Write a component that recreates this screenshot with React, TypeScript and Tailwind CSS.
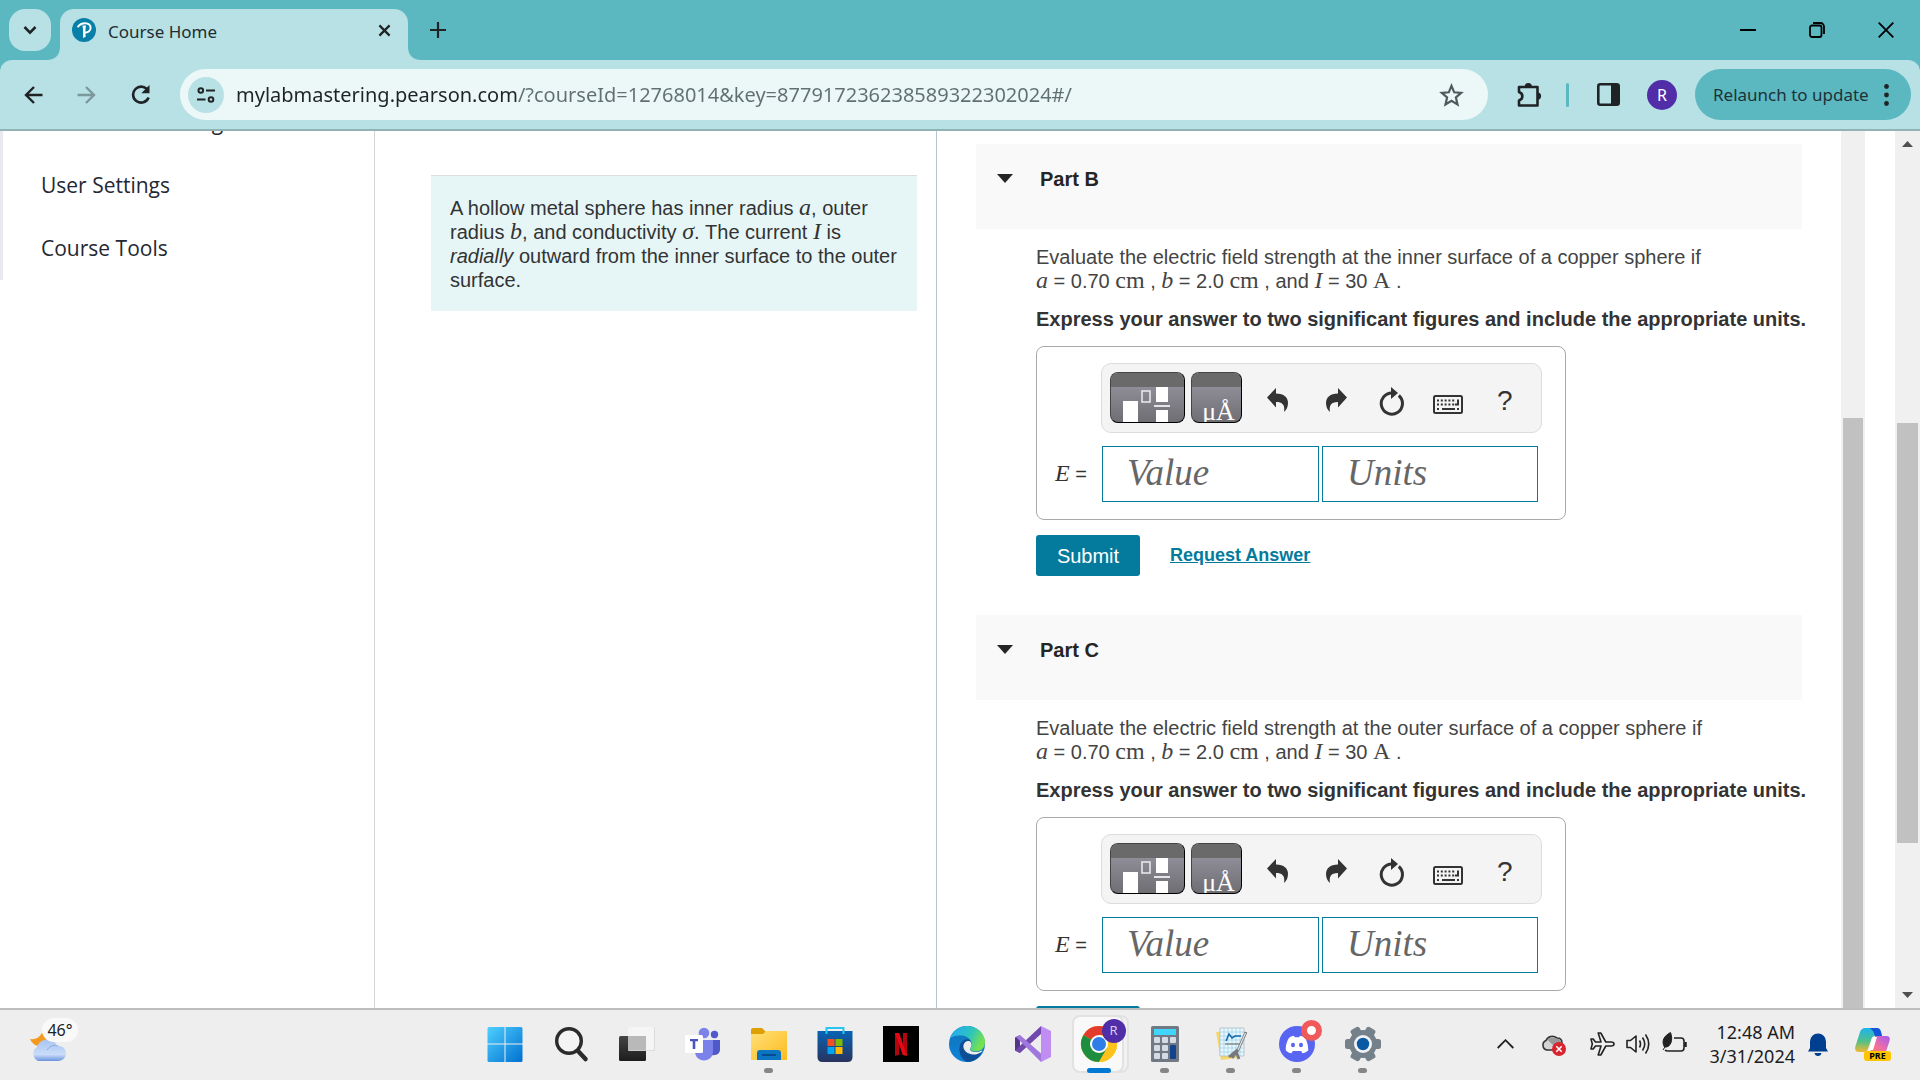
import React from "react";

const UI = "font-['Noto_Sans',sans-serif]";

function TabStrip() {
  return (
    <div className="flex h-[60px] shrink-0 items-stretch bg-[#5bb8c1]">
      <button aria-label="Search tabs" className="mt-[9px] ml-[9px] flex h-[42px] w-[42px] items-center justify-center rounded-2xl bg-[#b8e1e5]">
        <svg width="14" height="10" viewBox="0 0 14 10" fill="none" stroke="#1f2326" strokeWidth="2.6"><path d="M1.5 2 7 7.6 12.5 2" /></svg>
      </button>
      <div className="relative mt-[9px] ml-[9px] flex w-[348px] items-center rounded-t-[14px] bg-[#b8e1e5] pr-[17px] pb-[9px] pl-3">
        <svg className="absolute bottom-0 -left-[13px]" width="13" height="13" viewBox="0 0 13 13"><path d="M13 0v13H0C8 13 13 8 13 0z" fill="#b8e1e5" /></svg>
        <svg className="absolute -right-[13px] bottom-0" width="13" height="13" viewBox="0 0 13 13"><path d="M0 0v13h13C5 13 0 8 0 0z" fill="#b8e1e5" /></svg>
        <svg width="24" height="24" viewBox="0 0 24 24">
          <circle cx="12" cy="12" r="12" fill="#077fa8" />
          <path d="M5.600 9.200C7.500 6.400 10 5.200 13 5.200c3.600 0 5.800 1.900 5.600 4.800-.3 3.200-3.100 4.900-7.300 4.700" fill="none" stroke="#fff" strokeWidth="2" />
          <path d="M10.400 7.500c.8 3 .9 8 .6 12.500l2.700-1.300c-.4-4-.4-8 .3-11.200" fill="#fff" />
        </svg>
        <span className="ml-3 flex-1 pt-1 text-[17px] leading-6 text-[#1f2d30]">Course Home</span>
        <button aria-label="Close tab">
          <svg width="13" height="13" viewBox="0 0 14 14" stroke="#1f2326" strokeWidth="2.400"><path d="M1.500 1.500l11 11M12.500 1.500l-11 11" /></svg>
        </button>
      </div>
      <button aria-label="New tab" className="ml-[22px] self-center">
        <svg width="16" height="16" viewBox="0 0 16 16" stroke="#1f2326" strokeWidth="2.200"><path d="M8 0v16M0 8h16" /></svg>
      </button>
      <div className="ml-auto flex items-center gap-[53px] pr-[26px]">
        <button aria-label="Minimize"><svg width="16" height="16" viewBox="0 0 16 16" stroke="#000" strokeWidth="2"><path d="M0 8h16" /></svg></button>
        <button aria-label="Restore"><svg width="16" height="16" viewBox="0 0 16 16" fill="none" stroke="#000" strokeWidth="1.800"><rect x="1" y="3.500" width="11.500" height="11.500" rx="2" /><path d="M4 1h7.500A3.500 3.500 0 0 1 15 4.500V12" /></svg></button>
        <button aria-label="Close"><svg width="16" height="16" viewBox="0 0 16 16" stroke="#000" strokeWidth="1.800"><path d="M.7.7l14.600 14.600M15.300.7L.7 15.300" /></svg></button>
      </div>
    </div>
  );
}

function AddressBar() {
  return (
    <div className="bg-[#5bb8c1]">
      <div className="flex h-[71px] shrink-0 items-center rounded-t-[12px] border-b-2 border-[#90b3b6] bg-[#b8e1e5] pr-[9px] pl-6">
        <button aria-label="Back"><svg width="19" height="18" viewBox="0 0 19 18" fill="none" stroke="#1f2326" strokeWidth="2.400"><path d="M18.500 9H2M10 1 2 9l8 8" /></svg></button>
        <button aria-label="Forward" className="ml-[34px]"><svg width="19" height="18" viewBox="0 0 19 18" fill="none" stroke="#7c989c" strokeWidth="2.400"><path d="M.5 9H17M9 1l8 8-8 8" /></svg></button>
        <button aria-label="Reload" className="ml-[34px]"><svg width="21" height="20" viewBox="0 0 21 20" fill="none" stroke="#1f2326" strokeWidth="2.600"><path d="M18 5.500A8 8 0 1 0 18.600 12.500" /><path d="M19.500 0v8.200h-8.200z" fill="#1f2326" stroke="none" /></svg></button>
        <div className="ml-[29px] flex h-[51px] flex-1 items-center rounded-full bg-[#ecf8f8] pr-6 pl-2">
          <button aria-label="Site information" className="flex h-9 w-9 items-center justify-center rounded-full bg-[#b8e1e5]">
            <svg width="18" height="18" viewBox="0 0 18 18" fill="none" stroke="#1f2326" strokeWidth="2"><circle cx="3.800" cy="4.500" r="2.300" /><path d="M9 4.500h9M0 13.500h8.500" /><circle cx="14" cy="13.500" r="2.300" /></svg>
          </button>
          <input
            aria-label="Address"
            defaultValue="mylabmastering.pearson.com/?courseId=12768014&key=877917236238589322302024#/"
            className="ml-3 min-w-0 flex-1 bg-[linear-gradient(to_right,#1f2326_282px,#5f6f72_282px)] bg-clip-text text-[20px] leading-7 text-transparent"
          />
          <button aria-label="Bookmark this tab"><svg width="25" height="24" viewBox="0 0 25 24" fill="none" stroke="#4f5a5c" strokeWidth="2.200"><path d="M12.500 2.800l2.700 6.500 7 .6-5.300 4.600 1.600 6.900-6-3.700-6 3.700 1.600-6.900-5.300-4.600 7-.6z" /></svg></button>
        </div>
        <button aria-label="Extensions" className="ml-7"><svg width="26" height="26" viewBox="0 0 26 26"><path d="M3 5h18.500v18.500H3v-5c4.500-1.500 4.500-7 0-8.500z" fill="none" stroke="#1f2326" strokeWidth="2.600" strokeLinejoin="round" /><path d="M8.700 4.500a3.600 3.600 0 0 1 7.200 0zM21.500 10.500a3.600 3.600 0 0 1 0 7.200z" fill="#1f2326" /></svg></button>
        <div className="ml-6 h-6 w-[3px] rounded bg-[#5bb8c1]" />
        <button aria-label="Side panel" className="ml-7"><svg width="23" height="23" viewBox="0 0 23 23"><rect x="1.300" y="1.300" width="20.400" height="20.400" rx="2" fill="none" stroke="#1f2326" strokeWidth="2.600" /><path d="M14 1h8v21h-8z" fill="#1f2326" /></svg></button>
        <button aria-label="Profile" className="ml-[27px] flex h-[30px] w-[30px] items-center justify-center rounded-full bg-[#512da8] text-[16px] text-white">R</button>
        <button className="ml-[18px] flex h-[51px] w-[216px] items-center justify-between rounded-full bg-[#5bb8c1] pr-[22px] pl-[18px] text-[17px] whitespace-nowrap text-[#1d3236]">
          Relaunch to update
          <svg width="5" height="22" viewBox="0 0 5 22" fill="#1f2326"><circle cx="2.500" cy="2.500" r="2.400" /><circle cx="2.500" cy="11" r="2.400" /><circle cx="2.500" cy="19.500" r="2.400" /></svg>
        </button>
      </div>
    </div>
  );
}

function Sym({ children }: { children: React.ReactNode }) {
  return <i className="font-['Liberation_Serif',serif] text-[24px] leading-[0px]">{children}</i>;
}
function Unit({ children }: { children: React.ReactNode }) {
  return <span className="font-['Liberation_Serif',serif] text-[24px] leading-[0px]">{children}</span>;
}

function EditorToolbar() {
  const dark = "overflow-hidden rounded-lg border border-t-[#444] border-r-black border-b-black border-l-[#444] bg-linear-to-b from-[#9c9aa6] to-[#6f6e73]";
  return (
    <div className="ml-[64px] flex h-[70px] w-[441px] items-start rounded-[10px] border border-[#dcdcdc] bg-[#f4f4f4] pt-2 pl-2">
      <button aria-label="Templates" className={"h-[51px] w-[75px] " + dark}>
        <svg className="block" width="73" height="49" viewBox="0 0 73 49">
          <rect width="73" height="14" fill="#6a6a6a" />
          <rect x="12" y="28" width="15" height="21" fill="#fff" />
          <rect x="31" y="18" width="8" height="11" fill="none" stroke="#e6e6ea" strokeWidth="1.600" />
          <rect x="45" y="14" width="12" height="15" fill="#fff" />
          <rect x="43" y="32" width="16" height="2" fill="#e6e6ea" />
          <rect x="45" y="37" width="12" height="12" fill="#fff" />
        </svg>
      </button>
      <button aria-label="Symbols" className={"ml-[6px] h-[51px] w-[51px] " + dark}>
        <span className="block h-[14px] bg-[#6a6a6a]" />
        <span className="block h-[35px] pt-2 pl-1 font-['Liberation_Serif',serif] text-[26px] leading-[34px] text-white">μÅ</span>
      </button>
      <button aria-label="Undo" className="mt-[16px] ml-[25px]"><svg width="21" height="24" viewBox="0 0 21 24" fill="#333"><path d="M0 9.500 9 0v5.500c8 0 12 4 12 9.500 0 4-1.500 7-4 9 1-6-.5-10-8-10v5.500z" /></svg></button>
      <button aria-label="Redo" className="mt-[16px] ml-[38px]"><svg width="21" height="24" viewBox="0 0 21 24" fill="#333"><path d="M21 9.500 12 0v5.500C4 5.500 0 9.500 0 15c0 4 1.500 7 4 9-1-6 .5-10 8-10v5.500z" /></svg></button>
      <button aria-label="Reset" className="mt-[14px] ml-[32px]"><svg width="26" height="30" viewBox="0 0 26 30"><path d="M19.800 9.500A10.600 10.600 0 1 1 13 6.900" fill="none" stroke="#333" strokeWidth="3" /><path d="M12 1l7 6-7 6z" fill="#333" /></svg></button>
      <button aria-label="Keyboard shortcuts" className="mt-[23px] ml-[28px]"><svg width="30" height="20" viewBox="0 0 30 20"><rect x="1" y="1" width="28" height="17" rx="1.500" fill="none" stroke="#333" strokeWidth="2" /><path d="M4 5.500h19M4 9.500h18M4 14h3M24 14h2" stroke="#333" strokeWidth="2.200" strokeDasharray="2 1.800" /><path d="M9 14h13M25 4.500v5h-3" stroke="#333" strokeWidth="2" fill="none" /></svg></button>
      <button aria-label="Help" className="mt-[13px] ml-[34px] text-[28px] leading-8 text-[#333]">?</button>
    </div>
  );
}

function Part({ name, surface }: { name: string; surface: string }) {
  const field = "h-14 border border-[#047a9c] px-6 pb-[3px] font-['Liberation_Serif',serif] text-[37px] italic placeholder:text-[#666]";
  return (
    <section className="mb-[39px]">
      <h2>
        <button className="flex h-[85px] w-full items-start bg-[#f9f9f9] pt-[23px] pl-[21px] text-[20px] leading-6 font-bold text-[#252525]">
          <svg className="mt-[7px]" width="16" height="9" viewBox="0 0 16 9" fill="#252525"><path d="M0 0h16L8 9z" /></svg>
          <span className="ml-[27px]">Part {name}</span>
        </button>
      </h2>
      <div className="pt-4 pl-[60px]">
        <p className="h-12 text-[20px] leading-6 text-[#444]">
          Evaluate the electric field strength at the {surface} surface of a copper sphere if
          <br />
          <Sym>a</Sym> = 0.70 <Unit>cm</Unit> , <Sym>b</Sym> = 2.0 <Unit>cm</Unit> , and <Sym>I</Sym> = 30 <Unit>A</Unit> .
        </p>
        <p className="mt-[14px] text-[20px] leading-6 font-bold whitespace-nowrap text-[#333]">
          Express your answer to two significant figures and include the appropriate units.
        </p>
        <div className="mt-[15px] h-[174px] w-[530px] rounded-lg border border-[#aaa] pt-4">
          <EditorToolbar />
          <div className="mt-[13px] flex h-14 items-center">
            <span className="w-[65px] pb-[2px] pl-[18px] text-[20px] text-[#333]"><i className="font-['Liberation_Serif',serif] text-[24px]">E</i> =</span>
            <input aria-label={"Part " + name + " value"} placeholder="Value" className={"w-[217px] " + field} />
            <input aria-label={"Part " + name + " units"} placeholder="Units" className={"ml-[3px] w-[216px] " + field} />
          </div>
        </div>
        <div className="mt-[15px] flex h-[41px] items-center">
          <button className="h-[41px] w-[104px] rounded-[3px] bg-[#047a9c] text-[20px] text-white">Submit</button>
          <a href="#answer" className="ml-[30px] text-[18px] font-bold text-[#047a9c] underline">Request Answer</a>
        </div>
      </div>
    </section>
  );
}

function Page() {
  return (
    <main className="flex min-h-0 flex-1 overflow-hidden bg-white">
      <aside className="w-[375px] shrink-0 border-r border-[#d5d5d5]">
        <nav className="-mt-10 flex flex-col border-l-[3px] border-[#e9e9ef] pl-[38px] font-['Open_Sans',sans-serif] text-[21px] leading-7 text-[#252833]">
          <a href="#sharing" className="flex h-[63px] items-center pb-[2px]">Document Sharing</a>
          <a href="#settings" className="flex h-[63px] items-center pb-[2px]">User Settings</a>
          <a href="#tools" className="flex h-[63px] items-center pb-[2px]">Course Tools</a>
        </nav>
      </aside>
      <div className="w-[562px] shrink-0 border-r border-[#b5c7d6] pt-11 pr-[19px] pl-14 font-['Liberation_Sans',Arial,sans-serif]">
        <p className="h-[136px] border-t border-[#dcdedd] bg-[#e6f6f7] px-[19px] pt-5 text-[20px] leading-6 text-[#333]">
          A hollow metal sphere has inner radius <Sym>a</Sym>, outer<br />radius <Sym>b</Sym>, and conductivity <Sym>σ</Sym>. The current <Sym>I</Sym> is<br /><i>radially</i> outward from the inner surface to the outer<br />surface.
        </p>
      </div>
      <div className="min-w-0 flex-1 overflow-hidden pt-[13px] pr-[39px] pl-[39px] font-['Liberation_Sans',Arial,sans-serif]">
        <Part name="B" surface="inner" />
        <Part name="C" surface="outer" />
      </div>
      <div className="mr-[30px] w-6 shrink-0 bg-[#f0f0f0] px-[2px] pt-[287px]"><div className="h-full bg-[#c1c1c1]" /></div>
      <div className="flex w-[25px] shrink-0 flex-col items-center bg-[#f0f0f0] pt-[10px] pb-[10px]">
        <svg width="11" height="6" viewBox="0 0 11 6" fill="#505050"><path d="M0 6 5.500 0 11 6z" /></svg>
        <div className="mt-[276px] h-[420px] w-[21px] bg-[#c1c1c1]" />
        <svg className="mt-auto" width="11" height="6" viewBox="0 0 11 6" fill="#505050"><path d="M0 0 5.500 6 11 0z" /></svg>
      </div>
    </main>
  );
}

const apps: { name: string; open?: boolean; active?: boolean; art: React.ReactNode }[] = [
  { name: "Start", art: <><defs><linearGradient id="win" x1="0" y1="0" x2="1" y2="1"><stop offset="0" stopColor="#4fd0ff" /><stop offset="1" stopColor="#0070d0" /></linearGradient></defs><path fill="url(#win)" d="M2 1h15.500v16.500H.5V2.500Q.5 1 2 1zM18.500 1H34q1.500 0 1.500 1.500v15h-17zM.5 18.500h17V36H2Q.5 36 .5 34.500zM18.500 18.500h17v16Q35.500 36 34 36H18.500z" /></> },
  { name: "Search", art: <g fill="none" stroke="#2b2b2b"><circle cx="16" cy="15" r="12.300" strokeWidth="3.400" fill="#f4f4f4" /><path d="M25 25l7.500 8" strokeWidth="4.500" strokeLinecap="round" /></g> },
  { name: "Task view", art: <><defs><linearGradient id="tv" x1="0" y1="0" x2="0" y2="1"><stop offset="0" stopColor="#454545" /><stop offset="1" stopColor="#1d1d1d" /></linearGradient></defs><rect x="0" y="10" width="27" height="25" rx="1.500" fill="url(#tv)" /><rect x="9" y="1" width="27" height="24" rx="1.500" fill="#ddd" /><rect x="9" y="1" width="26" height="23" rx="1.500" fill="#f5f5f5" /><path d="M9 10h18v14.500H9z" fill="#b9b9b9" /></> },
  { name: "Teams", art: <><circle cx="19" cy="7" r="5.300" fill="#7b83eb" /><circle cx="29.500" cy="8.500" r="3.700" fill="#5059c9" /><path d="M26 14h9v9.500c0 4-3.500 6.500-9 5.500z" fill="#5059c9" /><path d="M10 14h18v11c0 6-4 9.500-9 9.500s-9-3.500-9-9.500z" fill="#7b83eb" /><rect y="9" width="18" height="18" rx="1.500" fill="#fff" /><path d="M5 13h8v2.300h-2.700V23H7.700v-7.700H5z" fill="#4b53bc" /></> },
  { name: "File Explorer", open: true, art: <><defs><linearGradient id="fold" x1="0" y1="0" x2="1" y2="1"><stop offset="0" stopColor="#ffe07a" /><stop offset="1" stopColor="#fdbc1e" /></linearGradient></defs><path d="M0 4Q0 2 2 2h9l4 4v4H0z" fill="#dda000" /><path d="M0 8h12l3-3h21v29H0z" fill="url(#fold)" /><path d="M6 34v-7q0-3 3-3h18q3 0 3 3v7z" fill="#0b75c4" /><path d="M11 29h14" stroke="#064b8c" strokeWidth="2" /></> },
  { name: "Microsoft Store", art: <><defs><linearGradient id="store" x1="0" y1="0" x2="0" y2="1"><stop offset="0" stopColor="#0864b4" /><stop offset="1" stopColor="#28335f" /></linearGradient></defs><path d="M.5 5h35v26q0 5-5 5h-25q-5 0-5-5z" fill="url(#store)" /><path d="M9.500 8V2h17v6" fill="none" stroke="#25c5f0" strokeWidth="2" /><path fill="#f25022" d="M10.500 13h7v7h-7z" /><path fill="#7fba00" d="M18.500 13h7v7h-7z" /><path fill="#00a4ef" d="M10.500 21h7v7h-7z" /><path fill="#ffb900" d="M18.500 21h7v7h-7z" /></> },
  { name: "Netflix", art: <><path d="M0 0h36v36H0z" /><path d="M12 7h4v22l-4 .7zM20 7h4v22.700l-4-.7z" fill="#b1060f" /><path d="M12 7h4.200L24 29.700l-4.200-.7z" fill="#e50914" /></> },
  { name: "Edge", art: <><defs><linearGradient id="eg" x1="0" y1="0" x2="1" y2=".4"><stop offset=".1" stopColor="#25a9ef" /><stop offset=".6" stopColor="#2cc4c0" /><stop offset="1" stopColor="#74e052" /></linearGradient><linearGradient id="eb" x1="0" y1="0" x2="0" y2="1"><stop offset="0" stopColor="#1272b9" /><stop offset="1" stopColor="#0e83d8" /></linearGradient></defs><circle cx="18" cy="18" r="18" fill="url(#eb)" /><path d="M1 13C3 5 10 0 18 0c11 0 18 8 18 16 0 6-4 9.500-9 9.500-4 0-6-1.500-6-2.500s1.500-1.700 1.500-5c0-4-4-8.500-10.500-8.500C6 9.500 2 11 1 13z" fill="url(#eg)" /><path d="M11 19c2-5 6-6.500 9-5.500 2 1 2.500 3 2.500 4.500 0 2.500-1.500 4-1.500 5 0 1.500 3 3 6 3 2.500 0 5-.5 7-2C30.500 32 25 36 18 36 12 33 9 26 11 19z" fill="#0c4f96" /><path d="M14.500 19c1-3 3-4.500 5.500-4 2 .5 2.500 2 2.500 3.500 0 2-1.500 3.500-1.500 4.700 0 1.300 2.500 2.800 6 2.800 2.500 0 4.500-.6 6-1.500l.5.700c-3 2.500-6 3.300-9 3.300-6.500-.3-11-4.500-10-9.500z" fill="#ededed" /></> },
  { name: "Visual Studio", art: <><path d="M0 11.500 5 9v18l-5-2.500z" fill="#56368c" /><path d="M0 24.500 5 27l21-19V0z" fill="#7148ad" /><path d="M1 11l4-2 21 18.500V36z" fill="#a077dd" /><path d="M26 0l10 5v26l-10 5z" fill="#c08df2" /></> },
  { name: "Chrome", active: true, art: <><circle cx="18" cy="18" r="18" fill="#fbbc05" /><path d="M18 18 2.400 9A18 18 0 0 1 33.600 9H18z" fill="#e33b2e" /><path d="M2.400 9A18 18 0 0 0 18 36l8-13.500-8-4.500z" fill="#1e8e3e" /><path d="M33.600 9H18v9l7.800 4.500L18 36A18 18 0 0 0 33.600 9z" fill="#fcc31c" /><circle cx="18" cy="18" r="9" fill="#fff" /><circle cx="18" cy="18" r="7" fill="#2f7de9" /></> },
  { name: "Calculator", open: true, art: <><rect x="4" width="28" height="36" rx="1.500" fill="#717a84" /><rect x="7" y="3" width="22" height="6" fill="#40d5fb" /><g fill="#d5dbe4"><rect x="7" y="11" width="6" height="6" rx="1" /><rect x="15" y="11" width="6" height="6" rx="1" /><rect x="23" y="11" width="6" height="6" rx="1" /><rect x="7" y="19" width="6" height="6" rx="1" /><rect x="15" y="19" width="6" height="6" rx="1" /><rect x="7" y="27" width="6" height="6" rx="1" /><rect x="15" y="27" width="6" height="6" rx="1" /></g><rect x="23" y="19" width="6" height="14" rx="1" fill="#12438c" /></> },
  { name: "Journal", open: true, art: <><path d="M3 6l16-1 5 27-16 2z" fill="#f7d76a" /><path d="M7 2h24v28H7z" fill="#e9f6fc" stroke="#a5b5bb" strokeWidth=".7" /><path d="M7 6h24M7 10h24M7 14h24M7 18h24M7 22h24M7 26h24M11 2v28M15 2v28M19 2v28M23 2v28M27 2v28" stroke="#9fd4ea" strokeWidth=".8" /><path d="M13 15l3-7 3 4 3-2h6" fill="none" stroke="#1668ad" strokeWidth="1.600" /><path d="M12 18h15" stroke="#777" strokeWidth="1.200" /><path d="M33 6 25 24l-6 8M16 31l7-6 3 8" stroke="#77797c" strokeWidth="2.800" fill="none" /><path d="M32.500 7 25 24" stroke="#e2e2e2" strokeWidth="1.200" /></> },
  { name: "Discord", open: true, art: <><circle cx="18" cy="18" r="18" fill="#5865f2" /><path d="M12 10.500l3-.7.8 1.500h4.400l.8-1.500 3 .7c3 1 5.500 8 5.200 14-2 1.700-4 2.500-5.700 2.800l-1.300-2.300h-8.400l-1.300 2.300c-2-.3-4-1.100-5.700-2.800-.4-6 2.200-13 5.200-14z" fill="#fff" /><ellipse cx="14" cy="19" rx="2" ry="2.300" fill="#5865f2" /><ellipse cx="22" cy="19" rx="2" ry="2.300" fill="#5865f2" /></> },
  { name: "Settings", open: true, art: <><g fill="#74808a"><circle cx="18" cy="18" r="14" /><rect x="0" y="13" width="36" height="10" rx="2.500" /><rect x="0" y="13" width="36" height="10" rx="2.500" transform="rotate(60 18 18)" /><rect x="0" y="13" width="36" height="10" rx="2.500" transform="rotate(120 18 18)" /></g><circle cx="18" cy="18" r="9" fill="#f1f3f5" /><circle cx="18" cy="18" r="6.200" fill="#0a59a5" /></> },
];

function Taskbar() {
  return (
    <footer className="flex h-[72px] shrink-0 items-stretch border-t-2 border-[#bdbdbd] bg-[#eee]">
      <div className="flex flex-1 items-start pt-2 pl-[30px]">
        <button aria-label="Weather, 46 degrees" className="relative h-[44px] w-12">
          <svg className="block" width="38" height="44" viewBox="0 0 38 44"><defs><linearGradient id="cloud" x1="0" y1="0" x2="0" y2="1"><stop offset="0" stopColor="#a9c4f2" /><stop offset=".7" stopColor="#c9dcf8" /><stop offset="1" stopColor="#6a93de" /></linearGradient></defs><path d="M0 21c5 1 9-1 12-6l6 2-4 12c-7 0-12-3-14-8z" fill="#f39a1e" /><path d="M8 43a8 8 0 0 1-1-14c2-6 8-9 14-7 3 1 5 3 6 6 5-1 9 3 9 7.500S32 43 28 43z" fill="url(#cloud)" /><path d="M17 32c3-5 8-5 11-4" stroke="#86a9ea" fill="none" /></svg>
          <span className="absolute top-0 left-3 flex h-6 w-9 items-center justify-center rounded-full bg-[#f9f9f9] text-[16px] leading-6 text-[#222]">46°</span>
        </button>
      </div>
      <div className="mr-[54px] flex">
        {apps.map((a) => (
          <button key={a.name} aria-label={a.name} className="relative flex w-[66px] items-center justify-center pb-[2px]">
            {a.active && <span className="absolute top-[5px] left-[6px] h-[58px] w-[57px] rounded-lg border-2 border-[#e2e2e2] bg-[#f1f1f1]" />}
            {a.active && <span className="absolute top-[5px] left-[6px] h-[58px] w-[52px] rounded-lg border-2 border-[#e2e2e2] bg-[#f9f9f9]" />}
            <svg className="relative" width="36" height="36" viewBox="0 0 36 36" overflow="visible">{a.art}</svg>
            {a.active && <span className="absolute top-[9px] right-[6px] flex h-6 w-6 items-center justify-center rounded-full bg-[#512da8] text-[13px] text-[#d8cdf2]">R</span>}
            {a.name === "Discord" && <span className="absolute top-[10px] right-[8px] h-[21px] w-[21px] rounded-full border-[6px] border-[#f05a5a] bg-white" />}
            {a.open && <span className="absolute bottom-[7px] h-[5px] w-[9px] rounded-full bg-[#868686]" />}
            {a.active && <span className="absolute bottom-[7px] h-[5px] w-6 rounded-full bg-[#0078d4]" />}
          </button>
        ))}
      </div>
      <div className="flex flex-1 items-center justify-end pr-[29px] pb-[2px]">
        <button aria-label="Show hidden icons"><svg width="17" height="10" viewBox="0 0 17 10" fill="none" stroke="#222" strokeWidth="1.800"><path d="M.7 9 8.500 1.200 16.300 9" /></svg></button>
        <button aria-label="OneDrive" className="ml-[27px]"><svg width="25" height="24" viewBox="0 0 25 24"><path d="M6 18a5 5 0 0 1-1-9.500C7 4 12 3 16 6c3 0 5 2 5 5l-8 7z" fill="#d4d4d4" stroke="#333" strokeWidth="1.600" /><path d="M6.500 8c3-3 6-3 8-1.500 3 0 5.500 1 6 4.500L12 13z" fill="#999" /><circle cx="18" cy="17" r="7" fill="#d9232e" /><path d="M15.300 14.300l5.400 5.400M20.700 14.300l-5.400 5.400" stroke="#fff" strokeWidth="1.600" /></svg></button>
        <button aria-label="Airplane mode" className="ml-[24px]"><svg width="25" height="24" viewBox="0 0 25 24" fill="none" stroke="#222" strokeWidth="1.600" strokeLinejoin="round"><path d="M1 7h2.200l2.300 3H11L8.200 1h2.600l5 9H21c4 0 4 4 0 4h-5.200l-5 9H8.200L11 14H5.500l-2.300 3H1l1.300-5z" /></svg></button>
        <button aria-label="Volume" className="ml-[11px]"><svg width="25" height="22" viewBox="0 0 25 22" fill="none" stroke="#222" strokeWidth="1.600" strokeLinejoin="round"><path d="M1 7.500h3.500L10 3v16l-5.500-4.500H1z" /><path d="M13.500 7.500q2 3.500 0 7M16.500 4.500q4.500 6.500 0 13M19.500 1.500q6.500 9.500 0 19" /></svg></button>
        <button aria-label="Battery" className="ml-[11px]"><svg width="25" height="24" viewBox="0 0 25 24" fill="none" stroke="#222" strokeWidth="1.600"><path d="M12 6h7q3 0 3 3v7q0 3-3 3H6q-2 0-3-1" /><path d="M23.500 10v5" strokeWidth="2.500" /><path d="M8.500.5C2 4-1 9 2.500 15 8.500 16 11.500 8 8.500.5zM1 18l5-8" fill="#222" strokeWidth="1" /></svg></button>
        <div className="ml-[23px] text-right text-[18px] leading-6 text-[#1d1d1d]"><div>12:48 AM</div><div>3/31/2024</div></div>
        <button aria-label="Notifications" className="ml-[13px]"><svg width="20" height="23" viewBox="0 0 20 23" fill="#003f8f"><path d="M0 18.500l2-3.500V8.500a8 8 0 0 1 16 0V15l2 3.500zM6.500 20h7q-.5 3-3.500 3t-3.500-3z" /></svg></button>
        <button aria-label="Copilot preview" className="relative ml-[27px] h-[34px] w-[36px]">
          <svg className="block" width="36" height="34" viewBox="0 0 36 34"><defs><linearGradient id="c1" x1="0" y1="0" x2="0" y2="1"><stop offset="0" stopColor="#1fb3f0" /><stop offset=".55" stopColor="#4fc08a" /><stop offset="1" stopColor="#f5b82e" /></linearGradient><linearGradient id="c2" x1="1" y1="0" x2="0" y2="1"><stop offset="0" stopColor="#a45cf5" /><stop offset=".6" stopColor="#f4709b" /><stop offset="1" stopColor="#f88a4f" /></linearGradient></defs><path d="M10 1h12q3 0 4 4l1 4h-7q-3 0-4 4l-3 9q-1 3-4 3H4q-5 0-3.500-6L5 5q1.500-4 5-4z" fill="url(#c1)" /><path d="M15 1h7q3 0 4 4l1 4h-7l-2-5z" fill="#1456d8" /><path d="M20 9h11q5 0 3.500 5l-3 9q-1 3-5 3H13q3-1 4-5l3-10z" fill="url(#c2)" /><path d="M18 10h4l-4 13h-4z" fill="#fff" /></svg>
          <span className="absolute right-0 bottom-0 h-[10px] w-[27px] rounded-[3px] bg-[#ffc400] text-center text-[9px] leading-[10px] font-bold text-black">PRE</span>
        </button>
      </div>
    </footer>
  );
}

export default function App() {
  return (
    <div className={"flex h-screen flex-col overflow-hidden " + UI}>
      <TabStrip />
      <AddressBar />
      <Page />
      <Taskbar />
    </div>
  );
}
